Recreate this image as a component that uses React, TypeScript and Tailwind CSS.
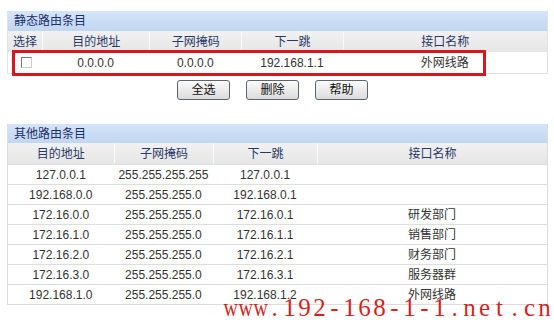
const staticCols = [
  { label: "选择", w: "w-[34px]" },
  { label: "目的地址", w: "w-[108px]" },
  { label: "子网掩码", w: "w-[92px]" },
  { label: "下一跳", w: "w-[102px]" },
  { label: "接口名称", w: "w-[205px]" },
]

const otherCols = [
  { label: "目的地址", w: "w-[106px]" },
  { label: "子网掩码", w: "w-[100px]" },
  { label: "下一跳", w: "w-[104px]" },
  { label: "接口名称", w: "w-[231px]" },
]

const otherRows = [
  ["127.0.0.1", "255.255.255.255", "127.0.0.1", ""],
  ["192.168.0.0", "255.255.255.0", "192.168.0.1", ""],
  ["172.16.0.0", "255.255.255.0", "172.16.0.1", "研发部门"],
  ["172.16.1.0", "255.255.255.0", "172.16.1.1", "销售部门"],
  ["172.16.2.0", "255.255.255.0", "172.16.2.1", "财务部门"],
  ["172.16.3.0", "255.255.255.0", "172.16.3.1", "服务器群"],
  ["192.168.1.0", "255.255.255.0", "192.168.1.2", "外网线路"],
]

const watermark = "www.192-168-1-1.net.cn"

function Title({ text, h }: { text: string; h: string }) {
  return (
    <div className={`flex items-center ${h} pl-[6px] bg-gradient-to-b from-[#d5e5f9] to-[#c1d6f3] text-[#1c2f6b]`}>
      {text}
    </div>
  )
}

function HeadRow({ cols }: { cols: { label: string; w: string }[] }) {
  return (
    <div className="flex h-[21px] bg-gradient-to-b from-[#f1f1f1] to-[#e6e6e6] text-[#2a3868]">
      {cols.map((c, i) => (
        <div
          key={i}
          className={`${c.w} flex items-center justify-center ${i > 0 ? "border-l border-[#fafafa]" : ""}`}
        >
          {c.label}
        </div>
      ))}
    </div>
  )
}

function Btn({ label }: { label: string }) {
  return (
    <div className="w-[53px] h-[20px] flex items-center justify-center rounded-[3px] border border-[#5d6470] bg-gradient-to-b from-[#fbfbfb] to-[#dcdcdc] text-[#111]">
      {label}
    </div>
  )
}

export default function App() {
  return (
    <div
      className="relative w-[554px] h-[324px] bg-white overflow-hidden text-[12px] leading-none"
      style={{ fontFamily: '"Liberation Sans", "Noto Sans CJK SC", sans-serif' }}
    >
      {/* static routes */}
      <div className="pt-[11px] pl-[7px]">
        <div className="w-[541px] border-x border-b border-[#e2e2e2]">
          <Title text="静态路由条目" h="h-[20px]" />
          <HeadRow cols={staticCols} />
          <div className="flex h-[21px] bg-white text-[#333]">
            <div className={`${staticCols[0].w} flex items-center justify-center`}>
              <div className="w-[11px] h-[11px] border border-t-[#777] border-l-[#777] border-r-[#ccc] border-b-[#ccc] bg-white ml-[4px]" />
            </div>
            <div className={`${staticCols[1].w} flex items-center justify-center`}>0.0.0.0</div>
            <div className={`${staticCols[2].w} flex items-center justify-center`}>0.0.0.0</div>
            <div className={`${staticCols[3].w} flex items-center justify-center`}>192.168.1.1</div>
            <div className={`${staticCols[4].w} flex items-center justify-center`}>外网线路</div>
          </div>
        </div>
        <div className="w-[541px] flex justify-center gap-[16px] pr-[10px] mt-[6px]">
          <Btn label="全选" />
          <Btn label="删除" />
          <Btn label="帮助" />
        </div>
      </div>

      {/* other routes */}
      <div className="pt-[24px] pl-[7px]">
        <div className="w-[541px] border-x border-b border-[#dcdcdc]">
          <Title text="其他路由条目" h="h-[19px]" />
          <HeadRow cols={otherCols} />
          {otherRows.map((r, i) => (
            <div key={i} className="flex h-[20px] border-t border-[#dedede] text-[#333]">
              {r.map((v, j) => (
                <div key={j} className={`${otherCols[j].w} flex items-center justify-center`}>
                  {v}
                </div>
              ))}
            </div>
          ))}
        </div>
      </div>

      {/* selected row highlight */}
      <div className="absolute left-[12px] top-[50px] w-[474px] h-[26px] border-[3px] border-[#d7171d]" />

      {/* watermark */}
      <div
        className="absolute left-[222px] top-[295px] flex text-[25px] leading-none text-[#d81f1f]"
        style={{ fontFamily: '"Liberation Serif", serif' }}
      >
        {watermark.split("").map((ch, i) => (
          <span
            key={i}
            className={`inline-block w-[15px] text-center ${ch === "w" ? "scale-x-[0.8]" : ""}`}
          >
            {ch}
          </span>
        ))}
      </div>
    </div>
  )
}
